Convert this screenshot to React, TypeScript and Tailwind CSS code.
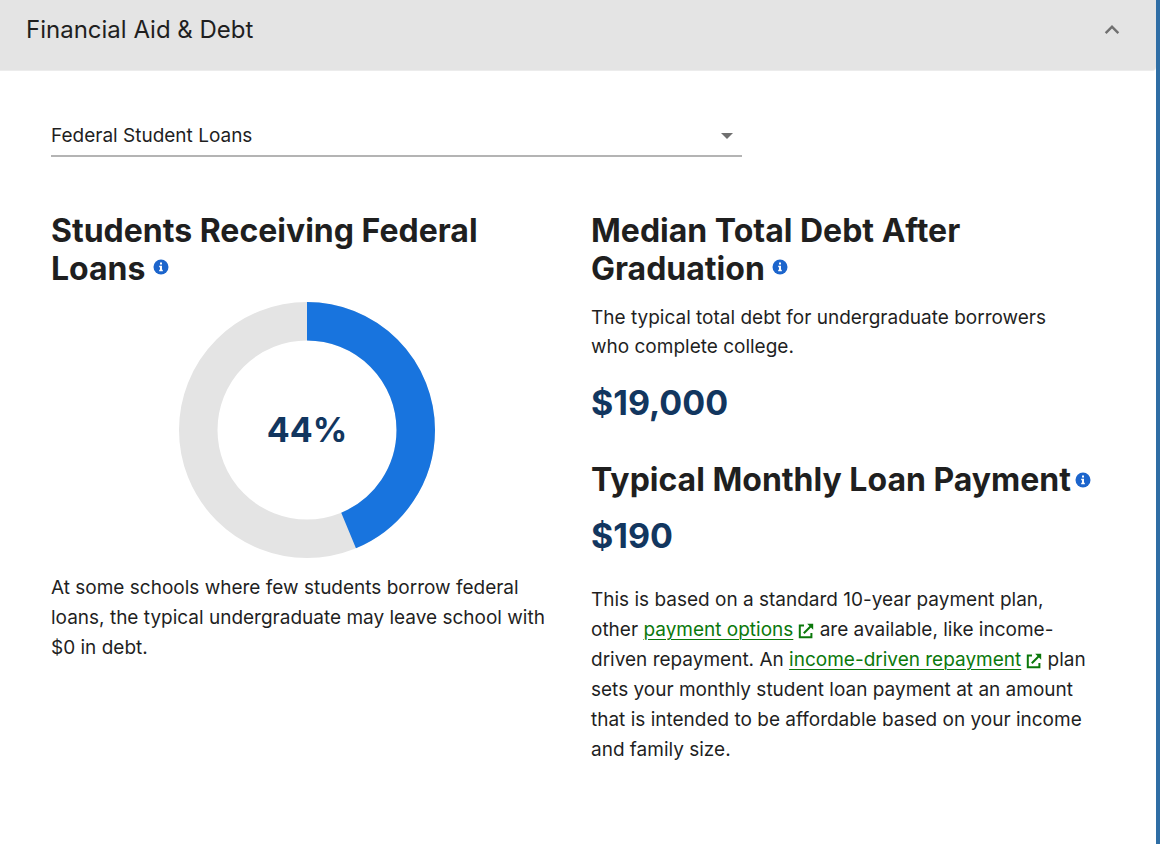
import { useState } from "react";
import type { ReactNode } from "react";

function InfoButton({ label, className }: { label: string; className: string }) {
  return (
    <button type="button" aria-label={label} className={`inline-block size-4 align-middle ${className}`}>
      <svg viewBox="0 0 16 16" className="block size-4">
        <circle cx="8" cy="8" r="7.5" fill="#1c65cc" />
        <path d="M7 3.6h2v2H7zM6.2 6.8H9v4h.8v1.4H6.2v-1.4H7V8.2h-.8z" fill="#fff" />
      </svg>
    </button>
  );
}

function ExternalLink({ children }: { children: ReactNode }) {
  return (
    <a href="#" className="text-[#0b780b] underline decoration-1 underline-offset-3">
      {children}
      <svg viewBox="0 0 16 16" className="ml-[5px] inline-block size-4 align-[-3px]" fill="none" stroke="currentColor" strokeWidth="2">
        <path d="M6 2.6H1.8v11.6h11.6V10" />
        <path d="M5.8 10.2 13 3" />
        <path d="M9.2 .8H15.2V6.8z" fill="currentColor" stroke="none" />
      </svg>
    </a>
  );
}

const heading = "text-[32px] leading-[38px] font-bold text-[#1f1f1f]";
const figure = "text-[34px] leading-[44px] font-bold text-[#12365f]";

function Donut({ percent, share }: { percent: number; share: number }) {
  return (
    <div className="mx-auto grid size-64 place-items-center">
      <svg viewBox="0 0 256 256" className="col-start-1 row-start-1 size-64" fill="none" strokeWidth="38.5">
        <circle cx="128" cy="128" r="108.75" stroke="#e4e4e4" />
        <circle
          cx="128"
          cy="128"
          r="108.75"
          stroke="#1874de"
          pathLength="100"
          strokeDasharray={`${share} 100`}
          transform="rotate(-90 128 128)"
        />
      </svg>
      <span className={`col-start-1 row-start-1 ${figure}`}>{percent}%</span>
    </div>
  );
}

export default function App() {
  const [open, setOpen] = useState(true);
  return (
    <div className="min-h-screen bg-[#2f6ea5] pr-1 font-['Inter','Liberation_Sans',sans-serif] text-[#1f1f1f]">
      <main className="min-h-screen bg-white">
        <button
          type="button"
          aria-expanded={open}
          onClick={() => setOpen(!open)}
          className="flex w-full items-start justify-between rounded-br border-b border-[#ececec] bg-[#e4e4e4] pt-4 pr-8 pb-[26px] pl-[26px] text-left"
        >
          <span className="text-[24px] leading-7">Financial Aid &amp; Debt</span>
          <svg viewBox="0 0 24 24" className="mt-px size-6 text-[#707070]" fill="currentColor">
            <path d="M12 8l-7.2 7.2 1.7 1.7L12 11.4l5.5 5.5 1.7-1.7z" />
          </svg>
        </button>
        {open && (
          <div className="pt-11 pr-[53px] pb-20 pl-[51px]">
            <div className="grid w-full max-w-[691px] items-center">
              <select
                aria-label="Financial aid category"
                className="col-start-1 row-start-1 h-[42px] w-full appearance-none border-b-2 border-[#b4b4b4] bg-transparent pt-0.5 pr-8 text-[19px] outline-none"
              >
                <option>Federal Student Loans</option>
              </select>
              <svg viewBox="0 0 12 6" className="pointer-events-none col-start-1 row-start-1 mr-[9px] h-1.5 w-3 justify-self-end" fill="#707070">
                <path d="M0 0h12L6 6z" />
              </svg>
            </div>
            <div className="mt-[55px] grid grid-cols-2 gap-7">
              <section>
                <h2 className={heading}>
                  Students Receiving Federal Loans <InfoButton label="About students receiving federal loans" className="-mt-2" />
                </h2>
                <div className="mt-[14px]">
                  <Donut percent={44} share={43.75} />
                </div>
                <p className="mt-[15px] text-[19px] leading-[30px]">
                  At some schools where few students borrow federal loans, the typical undergraduate may leave school with $0 in debt.
                </p>
              </section>
              <section className="pr-4">
                <h2 className={heading}>
                  Median Total Debt After Graduation <InfoButton label="About median total debt" className="-mt-2" />
                </h2>
                <p className="mt-[15px] text-[19px] leading-[29px]">
                  The typical total debt for undergraduate borrowers who complete college.
                </p>
                <p className={`mt-5 ${figure}`}>$19,000</p>
                <h2 className={`mt-9 whitespace-nowrap ${heading}`}>
                  Typical Monthly Loan Payment
                  <InfoButton label="About typical monthly loan payment" className="-mt-1 ml-1" />
                </h2>
                <p className={`mt-[15px] ${figure}`}>$190</p>
                <p className="mt-[27px] text-[19px] leading-[30px]">
                  This is based on a standard 10-year payment plan, other <ExternalLink>payment options</ExternalLink> are available, like
                  income-driven repayment. An <ExternalLink>income-driven repayment</ExternalLink> plan sets your monthly student loan
                  payment at an amount that is intended to be affordable based on your income and family size.
                </p>
              </section>
            </div>
          </div>
        )}
      </main>
    </div>
  );
}
